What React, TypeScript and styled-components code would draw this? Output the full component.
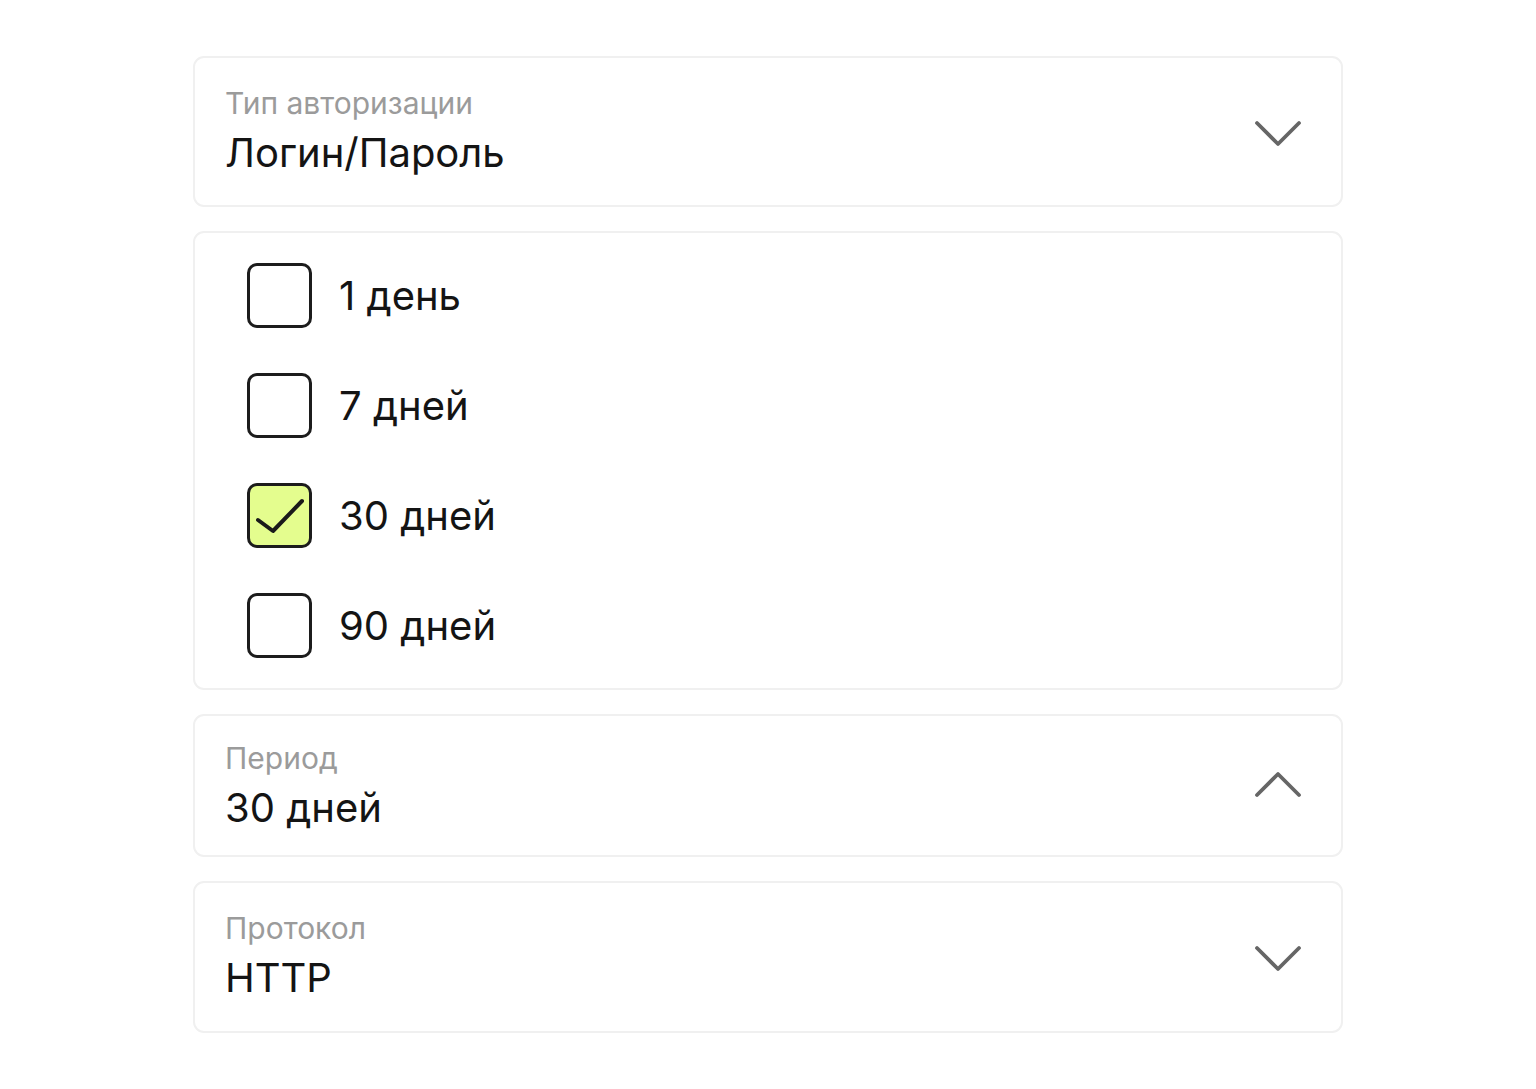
import styled, { createGlobalStyle } from "styled-components";

const GlobalStyle = createGlobalStyle`
  body {
    margin: 0;
    background: #fff;
    font-family: Inter, "Noto Sans", sans-serif;
    color: #141414;
  }
`;

type Period = { id: string; label: string; checked?: boolean };

const periods: Period[] = [
  { id: "1", label: "1 день" },
  { id: "7", label: "7 дней" },
  { id: "30", label: "30 дней", checked: true },
  { id: "90", label: "90 дней" },
];

const paddings = {
  normal: "27px 39px 29px 30px",
  short: "27px 39px 28px 30px",
  compact: "24px 39px 23px 30px",
};

const Chevron = ({ up }: { up?: boolean }) => (
  <ChevronSvg $up={up} width="48" height="28" viewBox="0 0 48 28" fill="none">
    <path
      d={up ? "M3 25 L24 4 L45 25" : "M3 3 L24 24 L45 3"}
      stroke="#666"
      strokeWidth="3.8"
      strokeLinecap="round"
      strokeLinejoin="round"
    />
  </ChevronSvg>
);

const Select = ({
  label,
  value,
  open,
  size = "normal",
}: {
  label: string;
  value: string;
  open?: boolean;
  size?: keyof typeof paddings;
}) => (
  <SelectCard $pad={paddings[size]}>
    <SelectText>
      <FieldLabel>{label}</FieldLabel>
      <FieldValue>{value}</FieldValue>
    </SelectText>
    <Chevron up={open} />
  </SelectCard>
);

export default function App() {
  return (
    <>
      <GlobalStyle />
      <Page>
        <Select label="Тип авторизации" value="Логин/Пароль" size="short" />
        <OptionsCard>
          {periods.map((p) => (
            <OptionRow key={p.id}>
              <Box $checked={p.checked}>
                {p.checked && (
                  <svg width="59" height="59" viewBox="0 0 59 59" fill="none">
                    <path
                      d="M8 34 L23 45 L52 15"
                      stroke="#1a1a1a"
                      strokeWidth="4"
                      strokeLinecap="round"
                      strokeLinejoin="round"
                    />
                  </svg>
                )}
              </Box>
              <OptionText>{p.label}</OptionText>
            </OptionRow>
          ))}
        </OptionsCard>
        <Select label="Период" value="30 дней" open size="compact" />
        <Select label="Протокол" value="HTTP" />
      </Page>
    </>
  );
}

const Page = styled.div`
  width: 1150px;
  margin: 0 auto;
  padding: 56px 0;
  display: flex;
  flex-direction: column;
  gap: 24px;
`;

const Card = styled.div`
  box-sizing: border-box;
  border: 2px solid #f0f0f0;
  border-radius: 11px;
  background: #fff;
`;

const SelectCard = styled(Card)<{ $pad: string }>`
  display: flex;
  align-items: center;
  justify-content: space-between;
  padding: ${(p) => p.$pad};
`;

const SelectText = styled.div`
  display: flex;
  flex-direction: column;
  gap: 8px;
`;

const FieldLabel = styled.div`
  font-size: 30px;
  line-height: 36px;
  color: #9b9b9b;
`;

const FieldValue = styled.div`
  font-size: 40px;
  line-height: 48px;
  color: #141414;
`;

const ChevronSvg = styled.svg<{ $up?: boolean }>`
  flex-shrink: 0;
  display: block;
  margin-top: ${(p) => (p.$up ? "-4px" : "5px")};
`;

const OptionsCard = styled(Card)`
  padding: 30px 52px;
  display: flex;
  flex-direction: column;
  gap: 45px;
`;

const OptionRow = styled.label`
  display: flex;
  align-items: center;
  gap: 27px;
  cursor: pointer;
`;

const Box = styled.span<{ $checked?: boolean }>`
  box-sizing: border-box;
  width: 65px;
  height: 65px;
  border: 3px solid #1c1c1c;
  border-radius: 10px;
  background: ${(p) => (p.$checked ? "#e4fd8e" : "#fff")};
  display: flex;
  align-items: center;
  justify-content: center;
  flex-shrink: 0;
`;

const OptionText = styled.span`
  font-size: 40px;
  line-height: 48px;
  color: #141414;
`;
